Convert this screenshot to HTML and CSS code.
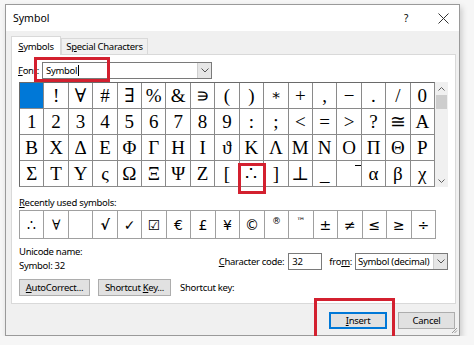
FILE: index.html
```html
<!DOCTYPE html>
<html lang="en">

<head>
    <meta charset="UTF-8">
    <meta name="viewport" content="width=device-width, initial-scale=1.0">
    <title>Symbol</title>
    <link rel="stylesheet" href="styles.css">
</head>

<body>
    <div class="dialog">
        <div class="titlebar">
            <span class="title">Symbol</span>
            <span class="help">?</span>
            <span class="close">
                <svg width="11" height="11" viewBox="0 0 11 11"><path d="M0.5 0.5 L10.5 10.5 M10.5 0.5 L0.5 10.5" stroke="#333" stroke-width="1" fill="none"/></svg>
            </span>
        </div>

        <div class="content">
            <div class="tabs">
                <div class="tab active"><u>S</u>ymbols</div>
                <div class="tab">S<u>p</u>ecial Characters</div>
            </div>

            <div class="panel">
                <!-- Font picker -->
                <div class="font-row">
                    <span class="font-label"><u>F</u>ont:</span>
                    <div class="combo font-combo">
                        <span class="combo-text">Symbol<span class="caret"></span></span>
                        <span class="drop"><svg width="8" height="5" viewBox="0 0 8 5"><path d="M0.5 0.5 L4 4 L7.5 0.5" stroke="#555" fill="none"/></svg></span>
                    </div>
                </div>

                <!-- Character chart -->
                <div class="chart">
                    <div class="grid">
                        <div class="cell selected"></div>
                        <div class="cell">!</div>
                        <div class="cell">∀</div>
                        <div class="cell">#</div>
                        <div class="cell">∃</div>
                        <div class="cell">%</div>
                        <div class="cell">&amp;</div>
                        <div class="cell">∍</div>
                        <div class="cell">(</div>
                        <div class="cell">)</div>
                        <div class="cell small">∗</div>
                        <div class="cell">+</div>
                        <div class="cell">,</div>
                        <div class="cell">−</div>
                        <div class="cell">.</div>
                        <div class="cell">/</div>
                        <div class="cell">0</div>

                        <div class="cell">1</div>
                        <div class="cell">2</div>
                        <div class="cell">3</div>
                        <div class="cell">4</div>
                        <div class="cell">5</div>
                        <div class="cell">6</div>
                        <div class="cell">7</div>
                        <div class="cell">8</div>
                        <div class="cell">9</div>
                        <div class="cell">:</div>
                        <div class="cell">;</div>
                        <div class="cell">&lt;</div>
                        <div class="cell">=</div>
                        <div class="cell">&gt;</div>
                        <div class="cell">?</div>
                        <div class="cell">≅</div>
                        <div class="cell">Α</div>

                        <div class="cell">Β</div>
                        <div class="cell">Χ</div>
                        <div class="cell">Δ</div>
                        <div class="cell">Ε</div>
                        <div class="cell">Φ</div>
                        <div class="cell">Γ</div>
                        <div class="cell">Η</div>
                        <div class="cell">Ι</div>
                        <div class="cell">ϑ</div>
                        <div class="cell">Κ</div>
                        <div class="cell">Λ</div>
                        <div class="cell">Μ</div>
                        <div class="cell">Ν</div>
                        <div class="cell">Ο</div>
                        <div class="cell">Π</div>
                        <div class="cell">Θ</div>
                        <div class="cell">Ρ</div>

                        <div class="cell">Σ</div>
                        <div class="cell">Τ</div>
                        <div class="cell">Υ</div>
                        <div class="cell">ς</div>
                        <div class="cell">Ω</div>
                        <div class="cell">Ξ</div>
                        <div class="cell">Ψ</div>
                        <div class="cell">Ζ</div>
                        <div class="cell">[</div>
                        <div class="cell">∴</div>
                        <div class="cell">]</div>
                        <div class="cell">⊥</div>
                        <div class="cell low">_</div>
                        <div class="cell ext"><span class="ext-line"></span></div>
                        <div class="cell">α</div>
                        <div class="cell">β</div>
                        <div class="cell">χ</div>
                    </div>

                    <div class="scrollbar">
                        <span class="arrow"><svg width="7" height="4" viewBox="0 0 7 4"><path d="M0.5 3.5 L3.5 0.5 L6.5 3.5" stroke="#606060" fill="none"/></svg></span>
                        <span class="thumb"></span>
                        <span class="track"></span>
                        <span class="arrow"><svg width="7" height="4" viewBox="0 0 7 4"><path d="M0.5 0.5 L3.5 3.5 L6.5 0.5" stroke="#606060" fill="none"/></svg></span>
                    </div>
                </div>

                <!-- Recently used -->
                <div class="recent-label"><u>R</u>ecently used symbols:</div>
                <div class="recent">
                    <div class="rcell serif">∴</div>
                    <div class="rcell serif">∀</div>
                    <div class="rcell"></div>
                    <div class="rcell bold">√</div>
                    <div class="rcell">✓</div>
                    <div class="rcell">☑</div>
                    <div class="rcell">€</div>
                    <div class="rcell">£</div>
                    <div class="rcell">¥</div>
                    <div class="rcell">©</div>
                    <div class="rcell sup">®</div>
                    <div class="rcell sup">™</div>
                    <div class="rcell">±</div>
                    <div class="rcell">≠</div>
                    <div class="rcell">≤</div>
                    <div class="rcell">≥</div>
                    <div class="rcell">÷</div>
                </div>

                <!-- Name and code -->
                <div class="info">
                    <div class="names">
                        <div>Unicode name:</div>
                        <div>Symbol: 32</div>
                    </div>
                    <div class="code">
                        <span><u>C</u>haracter code:</span>
                        <span class="field">32</span>
                        <span class="from-label">fro<u>m</u>:</span>
                        <div class="combo from-combo">
                            <span class="combo-text">Symbol (decimal)</span>
                            <span class="drop"><svg width="8" height="5" viewBox="0 0 8 5"><path d="M0.5 0.5 L4 4 L7.5 0.5" stroke="#555" fill="none"/></svg></span>
                        </div>
                    </div>
                </div>

                <div class="btn-row">
                    <button class="btn auto"><u>A</u>utoCorrect...</button>
                    <button class="btn short">Shortcut <u>K</u>ey...</button>
                    <span class="short-label">Shortcut key:</span>
                </div>
            </div>

            <div class="footer">
                <button class="btn default"><u>I</u>nsert</button>
                <button class="btn cancel">Cancel</button>
            </div>
        </div>

        <!-- Red highlight boxes -->
        <div class="mark mark-font"></div>
        <div class="mark mark-sym"></div>
        <div class="mark mark-insert"></div>

        <span class="grip"><svg width="7" height="7" viewBox="0 0 7 7"><path d="M6 1 L1 6 M6 3.5 L3.5 6" stroke="#9a9a9a" fill="none"/></svg></span>
    </div>
</body>

</html>
```

FILE: styles.css
```css
/* Page */
body {
    margin: 0;
    background-color: #f6f6f6;
    font-family: "Noto Sans", "DejaVu Sans", sans-serif;
    font-size: 9.5px;
    letter-spacing: -0.3px;
    color: #000;
}

u {
    text-decoration-thickness: 1px;
    text-underline-offset: 1px;
}

/* Dialog window */
.dialog {
    position: relative;
    margin: 4px 0 0 5px;
    width: 453px;
    height: 330px;
    border: 1px solid #9a9a9a;
    background-color: #f0f0f0;
    box-shadow: 2px 3px 6px rgba(0, 0, 0, 0.18);
}

.titlebar {
    height: 26px;
    background-color: #fff;
    display: flex;
    align-items: center;
    padding-left: 7px;
}

.title {
    flex: 1;
    font-size: 10.5px;
    letter-spacing: 0;
}

.help {
    width: 12px;
    text-align: center;
    font-size: 10px;
    margin-right: 26px;
}

.close {
    display: flex;
    margin-right: 10px;
}

.content {
    padding: 5px 3px 0 5px;
}

/* Tabs */
.tabs {
    display: flex;
    align-items: flex-end;
    height: 18px;
}

.tab {
    box-sizing: border-box;
    height: 16px;
    width: 87px;
    border: 1px solid #d9d9d9;
    border-bottom: none;
    display: flex;
    align-items: center;
    justify-content: center;
}

.tab.active {
    width: 50px;
    height: 19px;
    margin-bottom: -1px;
    background-color: #fff;
    position: relative;
    z-index: 1;
}

/* Tab page */
.panel {
    box-sizing: border-box;
    height: 250px;
    border: 1px solid #d9d9d9;
    background-color: #fff;
    padding: 7px 7px 0 7px;
}

.font-row {
    display: flex;
    align-items: center;
    height: 17px;
    margin-left: -1px;
}

.font-label {
    width: 24px;
}

.combo {
    box-sizing: border-box;
    height: 17px;
    border: 1px solid #7a7a7a;
    display: flex;
    align-items: stretch;
}

.font-combo {
    width: 170px;
}

.combo-text {
    flex: 1;
    display: flex;
    align-items: center;
    padding-left: 3px;
    white-space: nowrap;
    overflow: hidden;
}

.caret {
    display: inline-block;
    width: 1px;
    height: 11px;
    background-color: #000;
    margin-left: 1px;
}

.drop {
    width: 13px;
    flex-shrink: 0;
    background-color: #e6e6e6;
    border-left: 1px solid #cfcfcf;
    display: flex;
    align-items: center;
    justify-content: center;
}

/* Character chart */
.chart {
    display: flex;
    margin-top: 3px;
}

.grid {
    box-sizing: border-box;
    width: 417px;
    display: grid;
    grid-template-columns: repeat(17, 1fr);
    grid-auto-rows: 25px;
    gap: 1px;
    background-color: #8a8a8a;
    border: 1px solid #8a8a8a;
    border-top-color: #6a6a6a;
    border-left-color: #6a6a6a;
}

.cell {
    background-color: #fff;
    display: flex;
    align-items: center;
    justify-content: center;
    font-family: "Liberation Serif", "DejaVu Serif", serif;
    font-size: 19px;
    letter-spacing: 0;
    line-height: 1;
}

.cell.selected {
    background-color: #0078d7;
}

.cell.small {
    font-size: 15px;
}

.cell.low {
    align-items: flex-end;
    padding-bottom: 2px;
}

.cell.ext {
    align-items: flex-start;
    justify-content: flex-end;
}

.ext-line {
    width: 6px;
    height: 1px;
    background-color: #000;
    margin-top: 4px;
}

.scrollbar {
    width: 13px;
    height: 105px;
    background-color: #f0f0f0;
    display: flex;
    flex-direction: column;
    align-items: center;
}

.arrow {
    height: 13px;
    display: flex;
    align-items: center;
}

.thumb {
    width: 11px;
    height: 14px;
    background-color: #cdcdcd;
}

.track {
    flex: 1;
}

/* Recently used symbols */
.recent-label {
    margin-top: 9px;
    line-height: 14px;
}

.recent {
    box-sizing: border-box;
    width: 417px;
    display: grid;
    grid-template-columns: repeat(17, 1fr);
    grid-auto-rows: 27px;
    gap: 1px;
    background-color: #a0a0a0;
    border: 1px solid #a0a0a0;
}

.rcell {
    background-color: #fff;
    display: flex;
    align-items: center;
    justify-content: center;
    font-family: "DejaVu Sans", sans-serif;
    font-size: 14px;
    letter-spacing: 0;
}

.rcell.serif {
    font-family: "DejaVu Serif", serif;
}

.rcell.bold {
    font-weight: bold;
}

.rcell.sup {
    font-size: 9px;
    align-items: flex-start;
    padding-top: 5px;
}

/* Unicode name and character code */
.info {
    display: flex;
    justify-content: space-between;
    align-items: flex-end;
    margin-top: 6px;
    line-height: 14px;
}

.code {
    display: flex;
    align-items: center;
    margin-bottom: 3px;
    white-space: nowrap;
}

.field {
    box-sizing: border-box;
    width: 34px;
    height: 17px;
    border: 1px solid #7a7a7a;
    margin-left: 4px;
    padding-left: 3px;
    display: flex;
    align-items: center;
}

.from-label {
    margin-left: 7px;
}

.from-combo {
    width: 93px;
    margin-left: 3px;
}

.from-combo .combo-text {
    padding-left: 2px;
}

/* Buttons */
.btn-row {
    display: flex;
    align-items: center;
    gap: 8px;
    margin-top: 6px;
}

.btn {
    box-sizing: border-box;
    height: 17px;
    border: 1px solid #adadad;
    background-color: #e1e1e1;
    font: inherit;
    letter-spacing: inherit;
    color: #000;
    padding: 0;
}

.btn.auto {
    width: 71px;
}

.btn.short {
    width: 73px;
}

.short-label {
    margin-left: 1px;
}

.footer {
    display: flex;
    justify-content: flex-end;
    gap: 11px;
    margin-top: 8px;
    padding-right: 1px;
}

.btn.default {
    width: 58px;
    border-color: #0078d7;
    box-shadow: inset 0 0 0 1px #0078d7;
}

.btn.cancel {
    width: 57px;
}

/* Red highlight boxes drawn over the dialog */
.mark {
    position: absolute;
    box-sizing: border-box;
    border: 3px solid #d3202f;
}

.mark-font {
    left: 28px;
    top: 52px;
    width: 76px;
    height: 25px;
}

.mark-sym {
    left: 232px;
    top: 158px;
    width: 28px;
    height: 31px;
}

.mark-insert {
    left: 308px;
    top: 293px;
    width: 81px;
    height: 45px;
}

.grip {
    position: absolute;
    right: 1px;
    bottom: 1px;
    display: flex;
}
```
